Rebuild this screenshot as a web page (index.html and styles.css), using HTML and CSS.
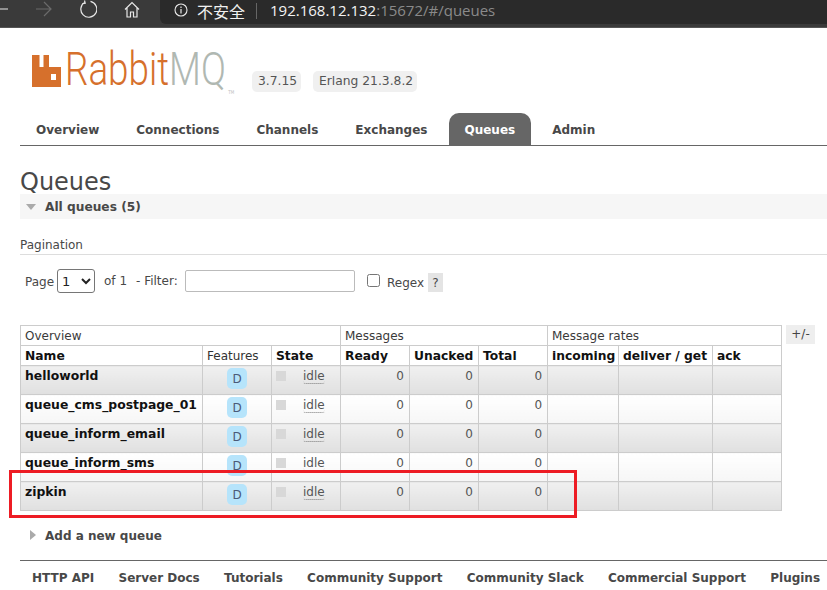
FILE: index.html
```html
<!DOCTYPE html>
<html lang="en">
<head>
<meta charset="utf-8">
<title>RabbitMQ Management</title>
<link rel="stylesheet" href="styles.css">
</head>
<body>
<div class="chrome">
  <div class="nav-icons">
    <svg class="ic-min" width="8" height="2" viewBox="0 0 8 2"><path d="M0 1H8" stroke="#e8e8e8" stroke-width="1"/></svg>
    <svg class="ic-fwd" width="18" height="16" viewBox="0 0 18 16"><path d="M1 8H16M9 1l7 7-7 7" fill="none" stroke="#6b6b6b" stroke-width="1.2"/></svg>
    <svg class="ic-rel" width="18" height="18" viewBox="0 0 18 18"><path d="M6 2.2A8 8 0 1 0 11.5 1.4M5.5 0.5L6.2 3.2 3.2 3.6" fill="none" stroke="#e8e8e8" stroke-width="1.2"/></svg>
    <svg class="ic-home" width="16" height="17" viewBox="0 0 16 17"><path d="M1 8.5L8 1.5l7 7M3 7v9h3.5v-5h3v5H13V7" fill="none" stroke="#e8e8e8" stroke-width="1.2"/></svg>
  </div>
  <div class="omnibox">
    <svg class="ic-info" width="14" height="14" viewBox="0 0 14 14"><circle cx="7" cy="7" r="6" fill="none" stroke="#e8e8e8" stroke-width="1.1"/><path d="M7 6v4.4M7 3.5v1.4" stroke="#e8e8e8" stroke-width="1.2"/></svg>
    <span class="insecure">不安全</span>
    <span class="sep"></span>
    <span class="url"><span class="host">192.168.12.132</span>:15672/#/queues</span>
  </div>
</div>

<header class="brand">
  <div class="logo">
    <svg class="logo-mark" width="29" height="33" viewBox="0 0 29 33"><path fill-rule="evenodd" d="M0 1H7.5V13H11.5V1H17V13H29V33H0zM19 20v6h5v-6z" fill="#d6702c"/></svg>
    <div class="logo-word"><span class="logo-rabbit">Rabbit</span><span class="logo-mq">MQ</span><span class="logo-tm">TM</span></div>
  </div>
  <span class="version v1">3.7.15</span>
  <span class="version v2">Erlang 21.3.8.2</span>
</header>

<nav class="tabs">
  <a class="tab">Overview</a>
  <a class="tab">Connections</a>
  <a class="tab">Channels</a>
  <a class="tab">Exchanges</a>
  <a class="tab active">Queues</a>
  <a class="tab">Admin</a>
</nav>

<main class="content">
  <h1 class="title">Queues</h1>
  <div class="section-head"><span class="tri-down"></span>All queues (5)</div>

  <h3 class="pag-title">Pagination</h3>
  <div class="filter-row">
    <span class="lbl-page">Page</span>
    <select class="page-select"><option>1</option></select>
    <span class="lbl-of">of 1</span>
    <span class="lbl-filter">- Filter:</span>
    <input class="filter-input" type="text">
    <input class="regex-box" type="checkbox">
    <span class="lbl-regex">Regex</span>
    <span class="help">?</span>
  </div>

  <div class="table-wrap">
    <table class="queues">
      <colgroup>
        <col class="c-name"><col class="c-feat"><col class="c-state"><col class="c-num"><col class="c-num"><col class="c-num"><col class="c-in"><col class="c-del"><col class="c-ack">
      </colgroup>
      <thead>
        <tr class="group"><th colspan="3">Overview</th><th colspan="3">Messages</th><th colspan="3">Message rates</th></tr>
        <tr class="cols"><th>Name</th><th class="light">Features</th><th>State</th><th>Ready</th><th>Unacked</th><th>Total</th><th>incoming</th><th>deliver / get</th><th>ack</th></tr>
      </thead>
      <tbody>
        <tr class="alt1"><td class="name">helloworld</td><td class="feat"><span class="badge">D</span></td><td><span class="state"><span class="dot"></span><span class="idle">idle</span></span></td><td class="n">0</td><td class="n">0</td><td class="n">0</td><td></td><td></td><td></td></tr>
        <tr class="alt2"><td class="name">queue_cms_postpage_01</td><td class="feat"><span class="badge">D</span></td><td><span class="state"><span class="dot"></span><span class="idle">idle</span></span></td><td class="n">0</td><td class="n">0</td><td class="n">0</td><td></td><td></td><td></td></tr>
        <tr class="alt1"><td class="name">queue_inform_email</td><td class="feat"><span class="badge">D</span></td><td><span class="state"><span class="dot"></span><span class="idle">idle</span></span></td><td class="n">0</td><td class="n">0</td><td class="n">0</td><td></td><td></td><td></td></tr>
        <tr class="alt2"><td class="name">queue_inform_sms</td><td class="feat"><span class="badge">D</span></td><td><span class="state"><span class="dot"></span><span class="idle">idle</span></span></td><td class="n">0</td><td class="n">0</td><td class="n">0</td><td></td><td></td><td></td></tr>
        <tr class="alt1"><td class="name">zipkin</td><td class="feat"><span class="badge">D</span></td><td><span class="state"><span class="dot"></span><span class="idle">idle</span></span></td><td class="n">0</td><td class="n">0</td><td class="n">0</td><td></td><td></td><td></td></tr>
      </tbody>
    </table>
    <span class="plusminus">+/-</span>
    <div class="annotation"></div>
  </div>

  <div class="add-queue"><span class="tri-right"></span>Add a new queue</div>
</main>

<footer class="foot">
  <a>HTTP API</a><a>Server Docs</a><a>Tutorials</a><a>Community Support</a><a>Community Slack</a><a>Commercial Support</a><a>Plugins</a>
</footer>
</body>
</html>
```

FILE: styles.css
```css
* { box-sizing: border-box; }
html, body { margin: 0; padding: 0; }
body {
  width: 827px;
  height: 590px;
  overflow: hidden;
  background: #fff;
  color: #484848;
  font-family: "DejaVu Sans", Verdana, sans-serif;
  font-size: 12px;
}

/* browser chrome */
.chrome {
  height: 28px;
  background: #3a3a3a;
  border-bottom: 1px solid #555;
  display: flex;
}
.nav-icons { width: 160px; position: relative; flex: none; }
.nav-icons svg { position: absolute; }
.ic-min { left: 0; top: 8px; }
.ic-fwd { left: 35px; top: 1px; }
.ic-rel { left: 79px; top: 0; }
.ic-home { left: 124px; top: 1px; }
.omnibox {
  flex: 1;
  height: 24px;
  background: #2a2a2a;
  border-bottom-left-radius: 6px;
  display: flex;
  align-items: center;
  padding-left: 14px;
  color: #f0f0f0;
}
.ic-info { margin-top: -4px; }
.insecure {
  margin-left: 9px;
  font-family: "Noto Sans CJK SC", sans-serif;
  font-size: 16px;
  line-height: 20px;
  margin-top: -3px;
}
.sep { width: 1px; height: 16px; background: #666; margin: -3px 0 0 11px; }
.url {
  margin-left: 13px;
  margin-top: -4px;
  font-family: "Open Sans", sans-serif;
  font-size: 15px;
  color: #8a8a8a;
  white-space: nowrap;
}
.host { color: #f4f4f4; }

/* brand */
.brand {
  height: 84px;
  padding-left: 32px;
  display: flex;
  position: relative;
}
.logo { display: flex; height: 50px; margin-top: 26px; width: 210px; }
.logo-mark { flex: none; }
.logo-word {
  display: flex;
  margin: -10px 0 0 4px;
  transform: scaleX(0.8);
  transform-origin: left top;
  white-space: nowrap;
}
.logo-rabbit, .logo-mq {
  font-family: Roboto, sans-serif;
  font-weight: 300;
  font-size: 46px;
  line-height: 50px;
}
.logo-rabbit { color: #d6702c; }
.logo-mq { color: #b0b8b2; }
.logo-tm { font-size: 5px; color: #bbb; align-self: flex-end; margin: 0 0 9px 3px; }
.version {
  position: absolute;
  top: 43px;
  height: 21px;
  line-height: 21px;
  background: #f0f0f0;
  border-radius: 5px;
  font-size: 12.3px;
  padding: 0 4px 0 5px;
  color: #555;
  white-space: nowrap;
  text-indent: 1px;
}
.v1 { left: 252px; }
.v2 { left: 313px; }

/* tabs */
.tabs {
  margin-left: 20px;
  height: 34px;
  border-bottom: 1px solid #666;
  display: flex;
  align-items: flex-end;
  padding-left: 16px;
  gap: 37px;
}
.tab {
  height: 32px;
  line-height: 34px;
  font-weight: bold;
  font-size: 12px;
  color: #484848;
}
.tab.active {
  background: #666;
  color: #fff;
  border-radius: 10px 10px 0 0;
  padding: 0 16px 0 15px;
  margin: 0 -16px 0 -15px;
}

/* main */
.content { margin-left: 20px; }
.title {
  font-weight: normal;
  font-size: 24px;
  line-height: 28px;
  height: 26px;
  margin: 22px 0 0;
  color: #484848;
}
.section-head {
  height: 25px;
  line-height: 27px;
  background: #f6f6f6;
  font-weight: bold;
  font-size: 12.2px;
  padding-left: 25px;
  position: relative;
  white-space: nowrap;
}
.tri-down {
  position: absolute;
  left: 6px;
  top: 10px;
  border-left: 5.5px solid transparent;
  border-right: 5.5px solid transparent;
  border-top: 6px solid #aaa;
}
.pag-title {
  margin: 17px 0 0;
  height: 19px;
  font-weight: normal;
  font-size: 12px;
  line-height: 18px;
  border-bottom: 1px solid #ddd;
}
.filter-row {
  height: 28px;
  margin-top: 14px;
  position: relative;
  font-size: 12px;
}
.filter-row > * { position: absolute; }
.lbl-page { left: 5px; top: 6px; }
.page-select {
  left: 37px; top: 0;
  width: 38px; height: 24px;
  font-family: "DejaVu Sans", sans-serif;
  font-size: 13px;
  background: #fff;
  border: 1px solid #767676;
  border-radius: 3px;
  color: #222;
}
.lbl-of { left: 84px; top: 5px; }
.lbl-filter { left: 116px; top: 5px; white-space: nowrap; }
.filter-input {
  left: 165px; top: 1px;
  width: 170px; height: 22px;
  border: 1px solid #bbb;
  border-radius: 2px;
  background: #fff;
  padding: 0;
}
.regex-box {
  left: 347px; top: 5px;
  width: 13px; height: 13px;
  margin: 0;
}
.lbl-regex { left: 367px; top: 7px; }
.help {
  left: 408px; top: 4px;
  width: 15px; height: 19px;
  line-height: 20px;
  text-align: center;
  background: #e4e4e4;
}

/* table */
.table-wrap { margin-top: 28px; position: relative; height: 186px; }
.queues {
  border-collapse: collapse;
  table-layout: fixed;
  width: 761px;
  font-size: 12px;
  color: #484848;
}
.c-name { width: 182px; }
.c-feat, .c-state, .c-num { width: 69px; }
.c-in { width: 71px; }
.c-del { width: 94px; }
.c-ack { width: 69px; }
.queues th, .queues td { border: 1px solid #ccc; padding: 0; }
.queues th {
  text-align: left;
  padding-left: 4px;
  height: 20px;
  line-height: 18px;
  white-space: nowrap;
  overflow: hidden;
}
.group th { font-weight: normal; color: #3a3a3a; }
.cols th { font-weight: bold; font-size: 12.3px; color: #111; }
.cols th.light { font-weight: normal; font-size: 12px; color: #333; }
.queues td { height: 29px; vertical-align: top; line-height: 18px; }
.alt1 td { background: linear-gradient(#f0f0f0, #e0e0e0); }
.alt2 td { background: linear-gradient(#fff, #f6f6f6); }
td.name {
  font-weight: bold;
  font-size: 12.4px;
  color: #111;
  padding-left: 4px;
  white-space: nowrap;
  padding-top: 1px;
}
td.feat { text-align: center; padding-top: 2px; }
.badge {
  display: inline-block;
  width: 20px;
  height: 21px;
  line-height: 22px;
  background: #b6e4fb;
  border-radius: 5px;
  color: #4a5a78;
  text-align: center;
}
.state { display: flex; align-items: flex-start; padding: 1px 0 0 4px; }
.dot { width: 10px; height: 10px; background: #d8d8d8; margin-top: 4px; flex: none; }
.idle {
  margin-left: 17px;
  border-bottom: 1px dotted #777;
  border-radius: 0 0 3px 3px;
  height: 17px;
  line-height: 18px;
  color: #555;
}
td.n { text-align: right; padding: 1px 5px 0 0; color: #555; }
.plusminus {
  position: absolute;
  left: 766px; top: 0;
  width: 29px; height: 19px;
  line-height: 19px;
  background: #eee;
  text-align: center;
  color: #444;
}
.annotation {
  position: absolute;
  left: -11px; top: 145px;
  width: 568px; height: 48px;
  border: 3px solid #ed1c24;
  pointer-events: none;
}
.add-queue {
  margin-top: 12px;
  height: 25px;
  line-height: 27px;
  font-weight: bold;
  font-size: 12px;
  padding-left: 25px;
  position: relative;
}
.tri-right {
  position: absolute;
  left: 10px;
  top: 7px;
  border-top: 5.5px solid transparent;
  border-bottom: 5.5px solid transparent;
  border-left: 6px solid #aaa;
}

/* footer */
.foot {
  margin: 12px 0 0 20px;
  border-top: 1px solid #666;
  height: 34px;
  padding: 10px 0 0 12px;
  display: flex;
  gap: 24.3px;
  font-weight: bold;
  font-size: 12px;
  white-space: nowrap;
  color: #484848;
}
```
